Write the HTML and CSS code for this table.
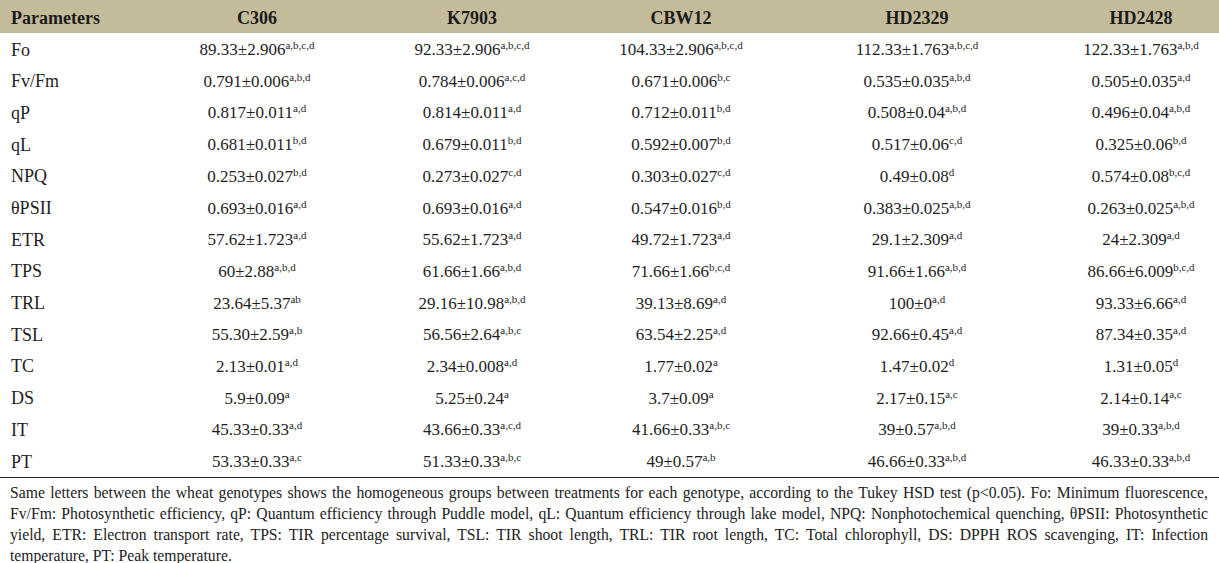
FILE: index.html
```html
<!DOCTYPE html>
<html>
<head>
<meta charset="utf-8">
<link rel="stylesheet" href="styles.css">
</head>
<body>
<table class="data">
<colgroup>
<col class="c0"><col class="c1"><col class="c2"><col class="c3"><col class="c4"><col class="c5">
</colgroup>
<thead>
<tr><th class="param">Parameters</th><th>C306</th><th>K7903</th><th>CBW12</th><th>HD2329</th><th>HD2428</th></tr>
</thead>
<tbody>
<tr><td class="param">Fo</td><td>89.33±2.906<sup>a,b,c,d</sup></td><td>92.33±2.906<sup>a,b,c,d</sup></td><td>104.33±2.906<sup>a,b,c,d</sup></td><td>112.33±1.763<sup>a,b,c,d</sup></td><td>122.33±1.763<sup>a,b,d</sup></td></tr>
<tr><td class="param">Fv/Fm</td><td>0.791±0.006<sup>a,b,d</sup></td><td>0.784±0.006<sup>a,c,d</sup></td><td>0.671±0.006<sup>b,c</sup></td><td>0.535±0.035<sup>a,b,d</sup></td><td>0.505±0.035<sup>a,d</sup></td></tr>
<tr><td class="param">qP</td><td>0.817±0.011<sup>a,d</sup></td><td>0.814±0.011<sup>a,d</sup></td><td>0.712±0.011<sup>b,d</sup></td><td>0.508±0.04<sup>a,b,d</sup></td><td>0.496±0.04<sup>a,b,d</sup></td></tr>
<tr><td class="param">qL</td><td>0.681±0.011<sup>b,d</sup></td><td>0.679±0.011<sup>b,d</sup></td><td>0.592±0.007<sup>b,d</sup></td><td>0.517±0.06<sup>c,d</sup></td><td>0.325±0.06<sup>b,d</sup></td></tr>
<tr><td class="param">NPQ</td><td>0.253±0.027<sup>b,d</sup></td><td>0.273±0.027<sup>c,d</sup></td><td>0.303±0.027<sup>c,d</sup></td><td>0.49±0.08<sup>d</sup></td><td>0.574±0.08<sup>b,c,d</sup></td></tr>
<tr><td class="param">θPSII</td><td>0.693±0.016<sup>a,d</sup></td><td>0.693±0.016<sup>a,d</sup></td><td>0.547±0.016<sup>b,d</sup></td><td>0.383±0.025<sup>a,b,d</sup></td><td>0.263±0.025<sup>a,b,d</sup></td></tr>
<tr><td class="param">ETR</td><td>57.62±1.723<sup>a,d</sup></td><td>55.62±1.723<sup>a,d</sup></td><td>49.72±1.723<sup>a,d</sup></td><td>29.1±2.309<sup>a,d</sup></td><td>24±2.309<sup>a,d</sup></td></tr>
<tr><td class="param">TPS</td><td>60±2.88<sup>a,b,d</sup></td><td>61.66±1.66<sup>a,b,d</sup></td><td>71.66±1.66<sup>b,c,d</sup></td><td>91.66±1.66<sup>a,b,d</sup></td><td>86.66±6.009<sup>b,c,d</sup></td></tr>
<tr><td class="param">TRL</td><td>23.64±5.37<sup>ab</sup></td><td>29.16±10.98<sup>a,b,d</sup></td><td>39.13±8.69<sup>a,d</sup></td><td>100±0<sup>a,d</sup></td><td>93.33±6.66<sup>a,d</sup></td></tr>
<tr><td class="param">TSL</td><td>55.30±2.59<sup>a,b</sup></td><td>56.56±2.64<sup>a,b,c</sup></td><td>63.54±2.25<sup>a,d</sup></td><td>92.66±0.45<sup>a,d</sup></td><td>87.34±0.35<sup>a,d</sup></td></tr>
<tr><td class="param">TC</td><td>2.13±0.01<sup>a,d</sup></td><td>2.34±0.008<sup>a,d</sup></td><td>1.77±0.02<sup>a</sup></td><td>1.47±0.02<sup>d</sup></td><td>1.31±0.05<sup>d</sup></td></tr>
<tr><td class="param">DS</td><td>5.9±0.09<sup>a</sup></td><td>5.25±0.24<sup>a</sup></td><td>3.7±0.09<sup>a</sup></td><td>2.17±0.15<sup>a,c</sup></td><td>2.14±0.14<sup>a,c</sup></td></tr>
<tr><td class="param">IT</td><td>45.33±0.33<sup>a,d</sup></td><td>43.66±0.33<sup>a,c,d</sup></td><td>41.66±0.33<sup>a,b,c</sup></td><td>39±0.57<sup>a,b,d</sup></td><td>39±0.33<sup>a,b,d</sup></td></tr>
<tr><td class="param">PT</td><td>53.33±0.33<sup>a,c</sup></td><td>51.33±0.33<sup>a,b,c</sup></td><td>49±0.57<sup>a,b</sup></td><td>46.66±0.33<sup>a,b,d</sup></td><td>46.33±0.33<sup>a,b,d</sup></td></tr>
</tbody>
</table>
<div class="note">
<p class="note-body">Same letters between the wheat genotypes shows the homogeneous groups between treatments for each genotype, according to the Tukey HSD test (p&lt;0.05). Fo: Minimum fluorescence, Fv/Fm: Photosynthetic efficiency, qP: Quantum efficiency through Puddle model, qL: Quantum efficiency through lake model, NPQ: Nonphotochemical quenching, θPSII: Photosynthetic yield, ETR: Electron transport rate, TPS: TIR percentage survival, TSL: TIR shoot length, TRL: TIR root length, TC: Total chlorophyll, DS: DPPH ROS scavenging, IT: Infection</p>
<p class="note-end">temperature, PT: Peak temperature.</p>
</div>
</body>
</html>
```
FILE: styles.css
```css
html, body {
  margin: 0;
  padding: 0;
  background: #ffffff;
}
body {
  font-family: "Liberation Serif", "Times New Roman", serif;
  color: #1e1e1e;
  width: 1219px;
}
.data {
  width: 1219px;
  border-collapse: collapse;
  table-layout: fixed;
  border-bottom: 1px solid #2a2a2a;
}
.c0 { width: 161px; }
.c1 { width: 192px; }
.c2 { width: 238px; }
.c3 { width: 180px; }
.c4 { width: 292px; }
.c5 { width: 156px; }
.data th {
  background: #c4bb9a;
  height: 30px;
  padding: 3px 0 0 0;
  font-size: 18px;
  font-weight: bold;
  text-align: center;
  color: #1c1c1c;
}
.data td {
  height: 29.2px;
  padding: 2.5px 0 0 0;
  font-size: 17px;
  text-align: center;
  white-space: nowrap;
}
.data .param {
  text-align: left;
  padding-left: 11px;
}
.data td.param {
  font-size: 18px;
}
.data sup {
  font-size: 11px;
  vertical-align: 0;
  position: relative;
  top: -6px;
  line-height: 0;
}
.note {
  padding: 4px 11px 0 10px;
  font-size: 15.7px;
  line-height: 21.2px;
  color: #222;
}
.note-body {
  margin: 0;
  text-align: justify;
  text-align-last: justify;
}
.note-end {
  margin: 0;
  text-align: left;
}
```
